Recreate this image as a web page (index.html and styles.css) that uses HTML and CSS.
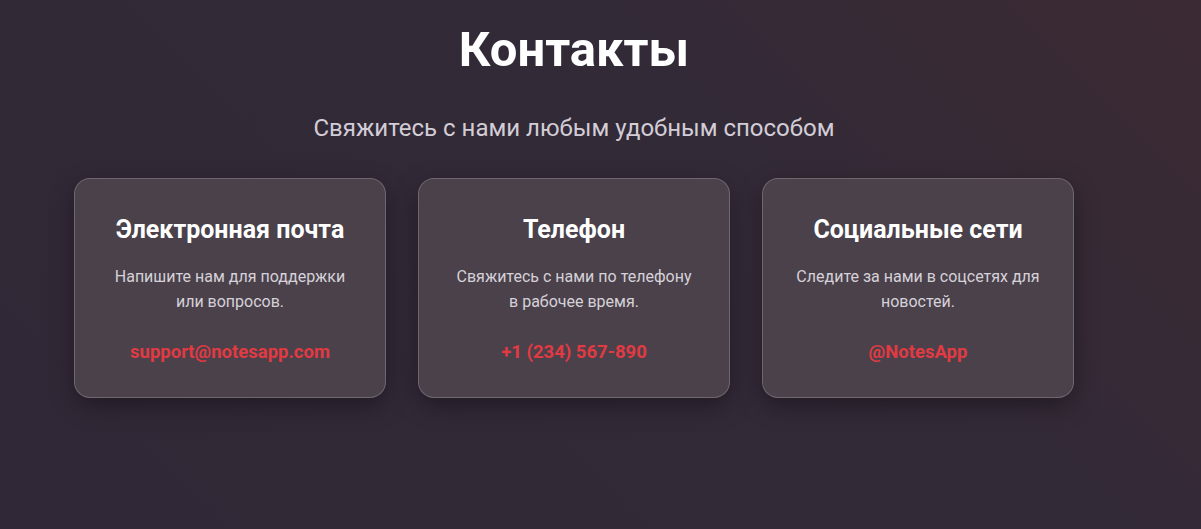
FILE: index.html
```html
<!DOCTYPE html>
<html lang="ru">
<head>
<meta charset="utf-8">
<title>Контакты</title>
<link rel="stylesheet" href="styles.css">
</head>
<body>
<section class="contacts">
  <h1 class="title">Контакты</h1>
  <p class="subtitle">Свяжитесь с нами любым удобным способом</p>
  <div class="cards">
    <div class="card">
      <h3 class="card-title">Электронная почта</h3>
      <p class="card-text">Напишите нам для поддержки или вопросов.</p>
      <a class="card-link" href="#">support@notesapp.com</a>
    </div>
    <div class="card">
      <h3 class="card-title">Телефон</h3>
      <p class="card-text">Свяжитесь с нами по телефону в рабочее время.</p>
      <a class="card-link" href="#">+1 (234) 567-890</a>
    </div>
    <div class="card">
      <h3 class="card-title">Социальные сети</h3>
      <p class="card-text">Следите за нами в соцсетях для новостей.</p>
      <a class="card-link" href="#">@NotesApp</a>
    </div>
  </div>
</section>
</body>
</html>
```

FILE: styles.css
```css
* { box-sizing: border-box; }
html, body { height: 100%; }
body {
  margin: 0;
  font-family: Roboto, "Noto Sans", sans-serif;
  background: linear-gradient(225deg, #3b2a33 0%, #332a37 35%, #312837 100%);
  color: #fff;
  min-height: 529px;
}
.contacts {
  width: 1148px;
  padding: 20px 74px 0;
  text-align: center;
}
.title {
  margin: 0;
  font-size: 49px;
  font-weight: 700;
  line-height: 60px;
}
.subtitle {
  margin: 32px 0 0;
  font-size: 24px;
  line-height: 32px;
  color: #d2cdd6;
}
.cards {
  display: grid;
  grid-template-columns: repeat(3, 1fr);
  gap: 32px;
  margin-top: 34px;
}
.card {
  background: #4a414b;
  border: 1px solid rgba(255,255,255,0.2);
  border-radius: 16px;
  box-shadow: 0 8px 24px rgba(0,0,0,0.35);
  padding: 36px 32px 32px;
  height: 220px;
}
.card-title {
  margin: 0;
  font-size: 25px;
  font-weight: 700;
  line-height: 30px;
}
.card-text {
  margin: 19px 0 0;
  font-size: 16px;
  line-height: 25px;
  color: #d6d1d8;
}
.card-link {
  display: block;
  margin-top: 26px;
  font-size: 18.5px;
  font-weight: 700;
  color: #e23a42;
  text-decoration: none;
  line-height: 24px;
}
```
